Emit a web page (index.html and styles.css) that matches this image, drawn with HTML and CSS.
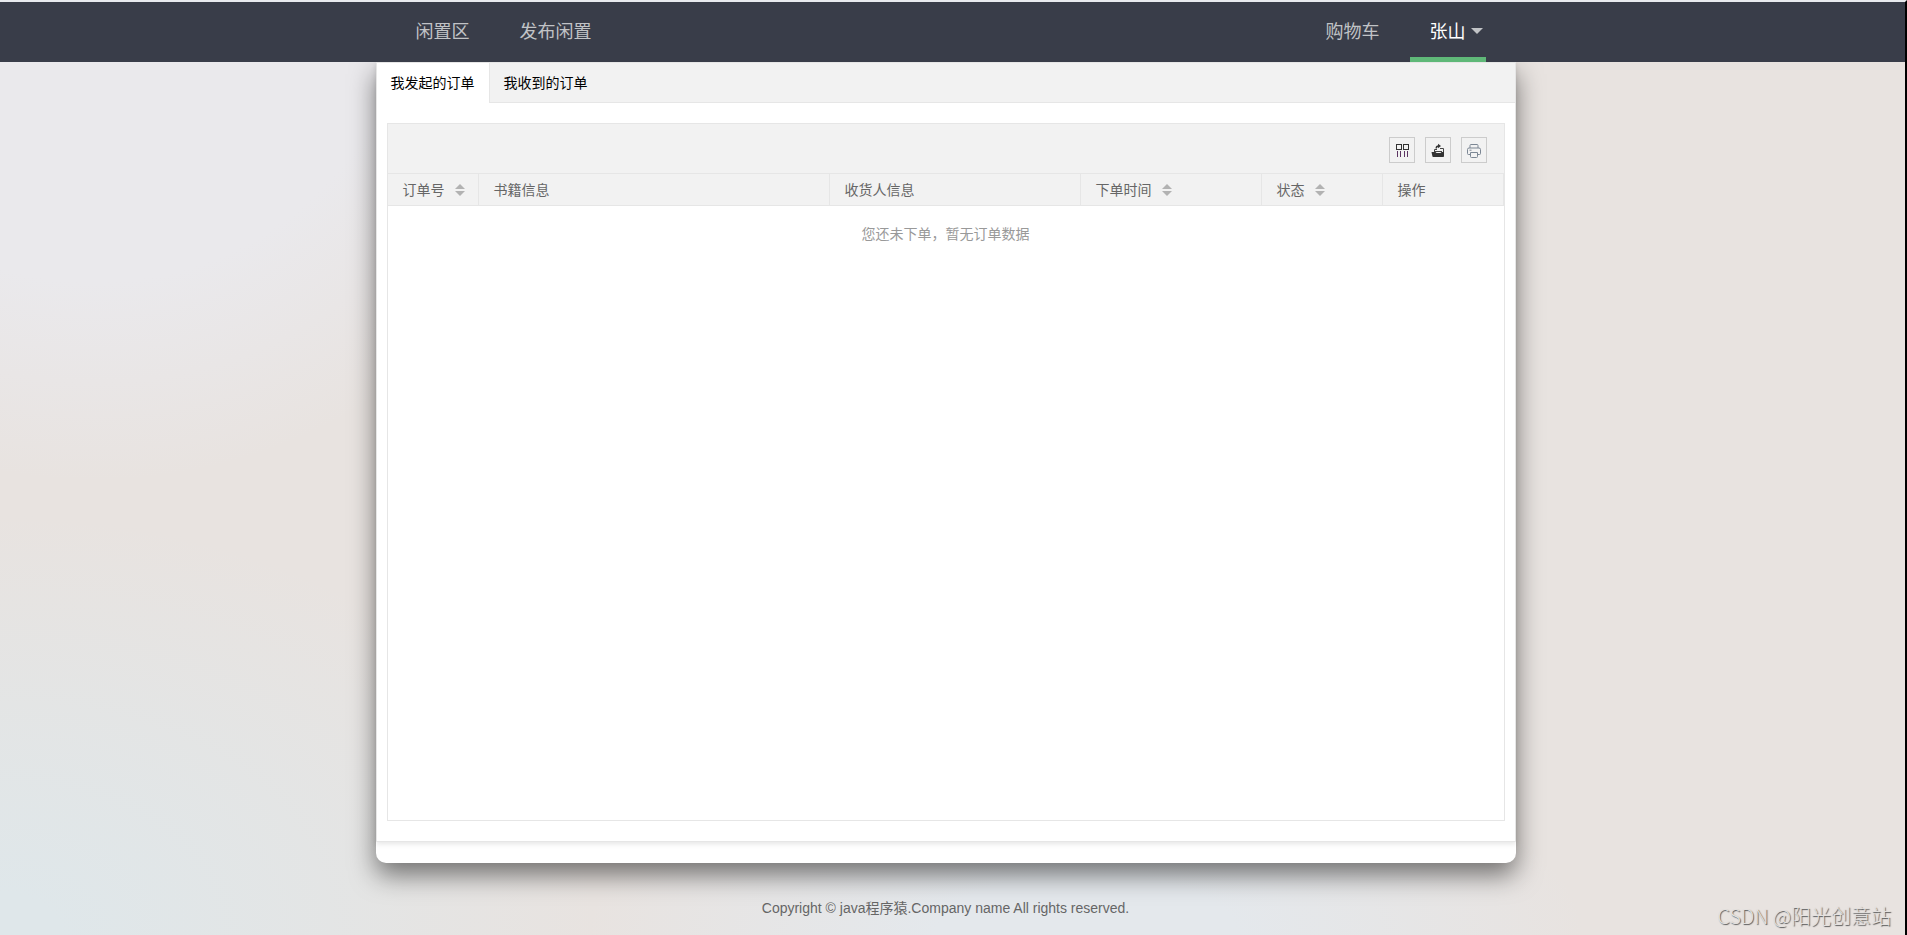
FILE: index.html
```html
<!DOCTYPE html>
<html lang="zh-CN">
<head>
<meta charset="utf-8">
<title>我的订单</title>
<link rel="stylesheet" href="styles.css">
</head>
<body>
<div class="page">
  <header class="header">
    <nav class="nav container">
      <a class="nav-item" href="#">闲置区</a>
      <a class="nav-item" href="#">发布闲置</a>
      <a class="nav-item nav-push" href="#">购物车</a>
      <a class="nav-item nav-active" href="#">张山<span class="nav-more"></span></a>
    </nav>
  </header>

  <main class="main">
    <div class="panel container">
      <section class="card">
        <div class="tabs" role="tablist">
          <button class="tab tab-active" type="button" role="tab" aria-selected="true">我发起的订单</button>
          <button class="tab" type="button" role="tab" aria-selected="false">我收到的订单</button>
        </div>
        <div class="tab-body">
          <div class="table-view">
            <div class="toolbar">
              <button class="tool" type="button" aria-label="筛选列">
                <svg width="16" height="16" viewBox="0 0 16 16" fill="none" stroke="#333" shape-rendering="crispEdges">
                  <path d="M2.5 2.5h5v5h-5zM9.5 2.5h5v5h-5z"/>
                  <path stroke="#5d3563" d="M3.5 9v6M6.5 9v6M10.5 9v6M13.5 9v6"/>
                </svg>
              </button>
              <button class="tool" type="button" aria-label="导出">
                <svg width="16" height="16" viewBox="0 0 16 16">
                  <path fill="#333" d="M1.500 10h4l1 1h4l1-1H14v4.200q0 .8-.8.8H3.200q-.8 0-.8-.8z"/>
                  <path fill="none" stroke="#444" d="M4.500 10V7.500h2.500M10 6.500h3.500V10M5 9.500h7"/>
                  <path fill="none" stroke="#333" stroke-width="1.400" d="M6.200 6.500q0-2.500 2.600-2.500"/>
                  <path fill="#333" d="M8 1.800l3 2.200L8 6.200z"/>
                </svg>
              </button>
              <button class="tool" type="button" aria-label="打印">
                <svg width="16" height="16" viewBox="0 0 16 16" fill="none" stroke="#7c8794">
                  <path d="M4 6V3.500q0-1 1-1h6q1 0 1 1V6"/>
                  <path d="M4 12.500H2.500q-1 0-1-1V7.500q0-1.500 1.500-1.500h10q1.500 0 1.500 1.500v4q0 1-1 1H12"/>
                  <path d="M4.500 10.500h7v4q0 1-1 1h-5q-1 0-1-1zM3.500 8.200h2"/>
                </svg>
              </button>
            </div>
            <table class="grid">
              <colgroup>
                <col class="col-id"><col class="col-book"><col class="col-receiver"><col class="col-time"><col class="col-state"><col class="col-action">
              </colgroup>
              <thead>
                <tr>
                  <th><span class="sortable">订单号<i class="sort"></i></span></th>
                  <th>书籍信息</th>
                  <th>收货人信息</th>
                  <th><span class="sortable">下单时间<i class="sort"></i></span></th>
                  <th><span class="sortable">状态<i class="sort"></i></span></th>
                  <th>操作</th>
                </tr>
              </thead>
              <tbody>
                <tr><td class="empty" colspan="6">您还未下单，暂无订单数据</td></tr>
              </tbody>
            </table>
          </div>
        </div>
      </section>
    </div>
  </main>

  <footer class="footer">Copyright © java程序猿.Company name All rights reserved.</footer>
  <div class="watermark">CSDN @阳光创意站</div>
</div>
</body>
</html>
```
FILE: styles.css
```css
* { box-sizing: border-box; }

body {
  margin: 0;
  font: 14px/24px "Liberation Sans", "Noto Sans CJK SC", sans-serif;
  color: #666;
}

.page {
  position: relative;
  min-height: 100vh;
  display: flex;
  flex-direction: column;
  border-top: 2px solid #e8eaee;
  border-right: 2px solid #000;
  background:
    radial-gradient(circle at 95px -40px, #eae9ec 320px, rgba(234, 233, 236, 0) 520px),
    radial-gradient(ellipse 600px 420px at 0 100%, #dfe7ea 10%, rgba(223, 231, 234, 0) 100%),
    radial-gradient(ellipse 500px 200px at 57% 100%, #e4e8ec 30%, rgba(228, 232, 236, 0) 100%),
    #e8e3e0;
}

.container {
  width: 100%;
  max-width: 1140px;
  margin: 0 auto;
}

.header,
.main {
  padding-right: 14px;
}

.header {
  position: relative;
  z-index: 1;
  background: #393d49;
}

.nav {
  display: flex;
  gap: 10px;
  padding: 0 30px 0 20px;
}

.nav-item {
  position: relative;
  padding: 0 20px;
  font-size: 18px;
  line-height: 60px;
  color: #c1c3c6;
  text-decoration: none;
}

.nav-push { margin-left: auto; }

.nav-active {
  color: #fff;
  box-shadow: inset 0 -5px #5fb878;
}

.nav-more {
  position: absolute;
  top: 26px;
  right: 3px;
  border: 6px solid transparent;
  border-top-color: #c1c3c6;
  border-bottom: 0;
}

.panel {
  padding-bottom: 21px;
  background: #fff;
  border-radius: 0 0 10px 10px;
  box-shadow: 0 12px 26px rgba(0, 0, 0, 0.5);
}

.card {
  border: 1px solid #e6e6e6;
  box-shadow: 0 2px 5px rgba(0, 0, 0, 0.1);
}

.tabs {
  display: flex;
  height: 40px;
  background: #f2f2f2;
  border-bottom: 1px solid #e6e6e6;
}

.tab {
  height: 40px;
  padding: 0 14px;
  border: 0;
  background: none;
  font: inherit;
  color: #000;
}

.tab-active {
  background: #fff;
  border-right: 1px solid #e6e6e6;
}

.tab-body { padding: 20px 10px; }

.table-view {
  height: calc(100vh - 237px);
  border: 1px solid #e6e6e6;
}

.toolbar {
  display: flex;
  justify-content: flex-end;
  gap: 10px;
  height: 50px;
  padding: 13px 17px 0 0;
  background: #f2f2f2;
  border-bottom: 1px solid #e6e6e6;
}

.tool {
  display: flex;
  align-items: center;
  justify-content: center;
  width: 26px;
  height: 26px;
  padding: 0;
  border: 1px solid #ccc;
  background: none;
}

.grid {
  width: 100%;
  table-layout: fixed;
  border-collapse: separate;
  border-spacing: 0;
}

.col-id { width: 91px; }
.col-book { width: 351px; }
.col-receiver { width: 251px; }
.col-time { width: 181px; }
.col-state { width: 121px; }
.col-action { width: 121px; }

.grid th {
  height: 32px;
  padding: 0 0 0 15px;
  background: #f2f2f2;
  border-right: 1px solid #e6e6e6;
  border-bottom: 1px solid #e6e6e6;
  font-weight: 400;
  text-align: left;
  white-space: nowrap;
}

.sortable {
  display: flex;
  align-items: center;
  gap: 10px;
}

.sort {
  display: grid;
  gap: 2px;
}

.sort::before,
.sort::after {
  content: "";
  border: 5px solid transparent;
}

.sort::before {
  border-top: 0;
  border-bottom-color: #b2b2b2;
}

.sort::after {
  border-bottom: 0;
  border-top-color: #b2b2b2;
}

.grid .empty {
  padding: 16px 0;
  text-align: center;
  color: #999;
}

.footer {
  padding: 33px 14px 15px 0;
  text-align: center;
}

.watermark {
  position: absolute;
  right: 14px;
  bottom: 5px;
  font-family: "Noto Sans CJK SC", sans-serif;
  font-size: 20px;
  font-weight: 300;
  line-height: 28px;
  color: #e4e1df;
  text-shadow: 1px 1px 1px #555;
}
```
